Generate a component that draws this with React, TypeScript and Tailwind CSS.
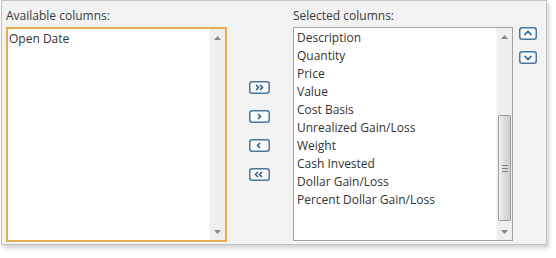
import React from "react";

const available = ["Open Date"];
const selected = [
  "Description",
  "Quantity",
  "Price",
  "Value",
  "Cost Basis",
  "Unrealized Gain/Loss",
  "Weight",
  "Cash Invested",
  "Dollar Gain/Loss",
  "Percent Dollar Gain/Loss",
];

const Arrow = ({ up }: { up?: boolean }) => (
  <svg width="7" height="4" viewBox="0 0 7 4">
    {up ? (
      <path d="M0 4 L3.5 0 L7 4 Z" fill="#8a8a8a" />
    ) : (
      <path d="M0 0 L7 0 L3.5 4 Z" fill="#8a8a8a" />
    )}
  </svg>
);

const Scrollbar = ({ thumb }: { thumb?: boolean }) => (
  <div className="flex h-full w-[16px] flex-col bg-[#efefef] border-l border-[#f7f7f7]">
    <div className="flex h-[16px] items-center justify-center pt-[2px]">
      <Arrow up />
    </div>
    <div className="flex-1 px-px">
      {thumb && (
        <div className="mt-[71px] flex h-[106px] items-center justify-center rounded-[2px] border border-[#9c9c9c] bg-gradient-to-r from-[#f4f4f4] via-[#dcdcdc] to-[#cfcfcf]">
          <div className="flex flex-col gap-[2px]">
            <div className="h-px w-[6px] bg-[#7a7a7a]" />
            <div className="h-px w-[6px] bg-[#7a7a7a]" />
            <div className="h-px w-[6px] bg-[#7a7a7a]" />
          </div>
        </div>
      )}
    </div>
    <div className="flex h-[16px] items-center justify-center">
      <Arrow />
    </div>
  </div>
);

const MoveButton = ({ kind }: { kind: "rr" | "r" | "l" | "ll" | "u" | "d" }) => {
  const paths: Record<string, string> = {
    rr: "M7 4 L9.5 6.5 L7 9 M11 4 L13.5 6.5 L11 9",
    r: "M9 4 L11.5 6.5 L9 9",
    l: "M11 4 L8.5 6.5 L11 9",
    ll: "M9 4 L6.5 6.5 L9 9 M13 4 L10.5 6.5 L13 9",
  };
  if (kind === "u" || kind === "d") {
    return (
      <svg width="18" height="13" viewBox="0 0 18 13">
        <rect x="0.75" y="0.75" width="16.5" height="11.5" rx="2.5" fill="#fbfcfd" stroke="#4a76a0" strokeWidth="1.5" />
        <path
          d={kind === "u" ? "M5.5 8 L9 4.5 L12.5 8" : "M5.5 5 L9 8.5 L12.5 5"}
          fill="none"
          stroke="#2f5f8f"
          strokeWidth="1.6"
        />
      </svg>
    );
  }
  return (
    <svg width="21" height="13" viewBox="0 0 21 13">
      <rect x="0.75" y="0.75" width="19.5" height="11.5" rx="2.5" fill="#fbfcfd" stroke="#4a76a0" strokeWidth="1.5" />
      <path d={paths[kind]} fill="none" stroke="#2f5f8f" strokeWidth="1.6" />
    </svg>
  );
};

export default function App() {
  return (
    <div className="h-[258px] w-[556px] bg-white pl-px font-['Open_Sans',sans-serif] text-[12px] text-[#333]">
      <div className="flex h-[245px] w-[546px] border border-[#c3c3c3] bg-[#f2f2f2] pl-[4px] pt-[6px] shadow-[2px_3px_4px_rgba(0,0,0,0.18)]">
        {/* AVAILABLE */}
        <div className="flex flex-col">
          <span className="h-[20px] leading-[17px] text-[#3a3a3a]">Available columns:</span>
          <div className="flex h-[215px] w-[221px] border-2 border-[#e2b053] bg-white">
            <div className="flex-1 pl-[1px] pt-[1px]">
              {available.map((c) => (
                <div key={c} className="h-[18px] leading-[18px]">
                  {c}
                </div>
              ))}
            </div>
            <Scrollbar />
          </div>
        </div>

        {/* MOVE BUTTONS */}
        <div className="flex w-[66px] flex-col gap-[16px] pl-[22px] pt-[74px]">
          <MoveButton kind="rr" />
          <MoveButton kind="r" />
          <MoveButton kind="l" />
          <MoveButton kind="ll" />
        </div>

        {/* SELECTED */}
        <div className="flex flex-col">
          <span className="h-[20px] leading-[17px] text-[#3a3a3a]">Selected columns:</span>
          <div className="flex h-[214px] w-[220px] border border-[#a3a3a3] bg-white">
            <div className="flex-1 pl-[3px] pt-px">
              {selected.map((c) => (
                <div key={c} className="h-[18px] leading-[18px]">
                  {c}
                </div>
              ))}
            </div>
            <Scrollbar thumb />
          </div>
        </div>

        {/* ORDER BUTTONS */}
        <div className="flex flex-col gap-[11px] pl-[6px] pt-[20px]">
          <MoveButton kind="u" />
          <MoveButton kind="d" />
        </div>
      </div>
    </div>
  );
}
